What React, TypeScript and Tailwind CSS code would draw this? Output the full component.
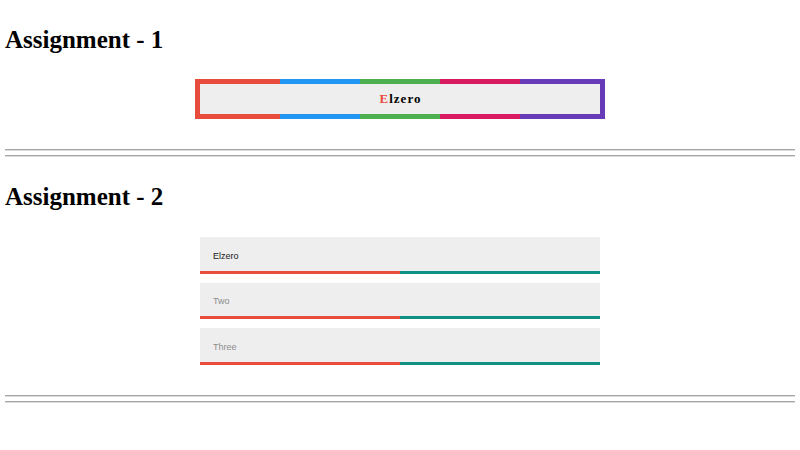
import React from "react";

const serif = { fontFamily: '"Liberation Serif", "Times New Roman", serif' };

function Hr({ className = "" }: { className?: string }) {
  return <div className={`h-[2px] w-full border-t border-b border-t-[#a4a4a4] border-b-[#dedede] ${className}`} />;
}

function Strip() {
  return (
    <div className="flex h-[5px] w-full">
      <div className="w-[85px] bg-[#e74c3c]" />
      <div className="w-[80px] bg-[#2196f3]" />
      <div className="w-[80px] bg-[#4caf50]" />
      <div className="w-[80px] bg-[#d81b60]" />
      <div className="w-[85px] bg-[#673ab7]" />
    </div>
  );
}

function Field({ text, placeholder }: { text: string; placeholder?: boolean }) {
  return (
    <div className="flex flex-col w-[400px]">
      <div
        className={`h-[33.5px] bg-[#eeeeee] flex items-center pl-[13px] pt-[5px] text-[9px] ${
          placeholder ? "text-[#8c8c8c]" : "text-[#1a1a1a]"
        }`}
        style={{ fontFamily: '"Liberation Sans", Arial, sans-serif' }}
      >
        {text}
      </div>
      <div className="flex h-[3.2px]">
        <div className="w-1/2 bg-[#e74c3c]" />
        <div className="w-1/2 bg-[#0f9284]" />
      </div>
    </div>
  );
}

export default function App() {
  return (
    <div className="w-[800px] h-[450px] bg-white px-[5px] flex flex-col overflow-hidden">
      <h1 className="mt-[25px] text-[25px] leading-[29px] font-bold text-black" style={serif}>
        Assignment - 1
      </h1>
      <div className="mt-[25px] self-center w-[410px] flex flex-col">
        <Strip />
        <div className="h-[30px] border-l-[5px] border-r-[5px] border-l-[#e74c3c] border-r-[#673ab7] bg-[#eeeeee] flex items-center justify-center">
          <span className="text-[13px] font-bold tracking-[1px] text-black pl-[1px]" style={serif}>
            <span className="text-[#e74c3c]">E</span>lzero
          </span>
        </div>
        <Strip />
      </div>
      <Hr className="mt-[30px]" />
      <Hr className="mt-[4px]" />
      <h2 className="mt-[25px] text-[25px] leading-[29px] font-bold text-black" style={serif}>
        Assignment - 2
      </h2>
      <div className="mt-[26px] self-center flex flex-col gap-[9px]">
        <Field text="Elzero" />
        <Field text="Two" placeholder />
        <Field text="Three" placeholder />
      </div>
      <Hr className="mt-[30px]" />
      <Hr className="mt-[4px]" />
    </div>
  );
}
